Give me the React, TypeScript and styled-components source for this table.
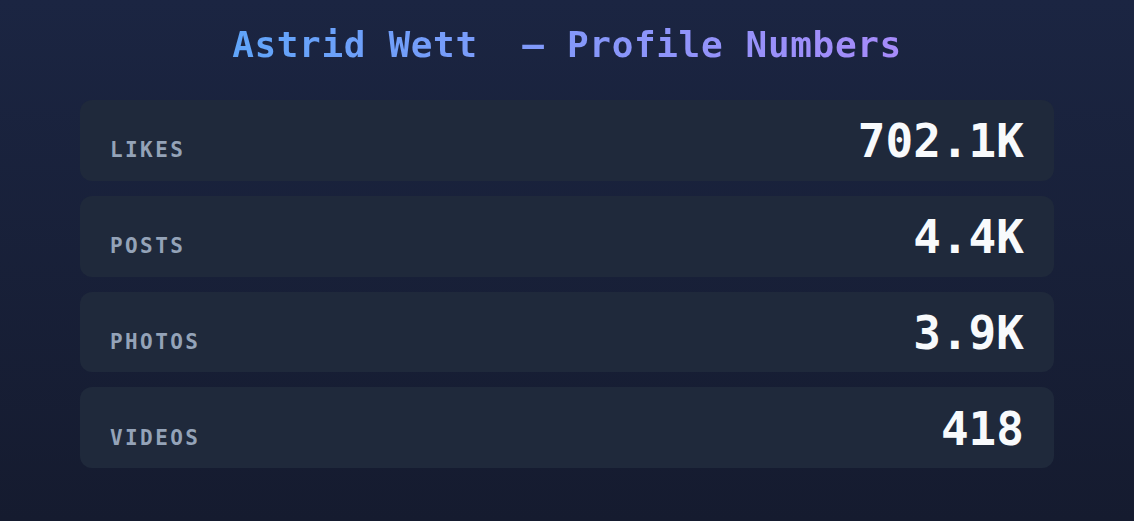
import styled, { createGlobalStyle } from "styled-components";

const GlobalStyle = createGlobalStyle`
  html, body {
    margin: 0;
    padding: 0;
  }
  body {
    background: #151b2f;
    font-family: "DejaVu Sans Mono", "Liberation Mono", monospace;
  }
`;

const Page = styled.main`
  min-height: 100vh;
  box-sizing: border-box;
  padding: 24px 80px;
  background: linear-gradient(180deg, #1b2542 0%, #151b2f 100%);
`;

const Title = styled.h1`
  margin: 0 auto 35px;
  width: fit-content;
  text-align: center;
  font-size: 36px;
  font-weight: 700;
  letter-spacing: 0.65px;
  line-height: normal;
  white-space: pre;
  background: linear-gradient(90deg, #60a5fa 0%, #a78bfa 100%);
  -webkit-background-clip: text;
  background-clip: text;
  color: transparent;
`;

const StatList = styled.ul`
  list-style: none;
  margin: 0;
  padding: 0;
  display: flex;
  flex-direction: column;
  gap: 15px;
`;

const StatRow = styled.li`
  display: flex;
  align-items: baseline;
  justify-content: space-between;
  padding: 14.3px 30px 12.5px;
  border-radius: 12px;
  background: #1f293b;
`;

const Label = styled.span`
  font-size: 21px;
  font-weight: 700;
  letter-spacing: 2.4px;
  text-transform: uppercase;
  color: #94a3b8;
`;

const Value = styled.span`
  font-size: 46px;
  font-weight: 700;
  line-height: normal;
  color: #f8fafc;
`;

const stats = [
  { label: "Likes", value: "702.1K" },
  { label: "Posts", value: "4.4K" },
  { label: "Photos", value: "3.9K" },
  { label: "Videos", value: "418" },
];

const App = () => {
  return (
    <>
      <GlobalStyle />
      <Page>
        <Title>{"Astrid Wett  — Profile Numbers"}</Title>
        <StatList>
          {stats.map((stat) => (
            <StatRow key={stat.label}>
              <Label>{stat.label}</Label>
              <Value>{stat.value}</Value>
            </StatRow>
          ))}
        </StatList>
      </Page>
    </>
  );
};

export default App;
